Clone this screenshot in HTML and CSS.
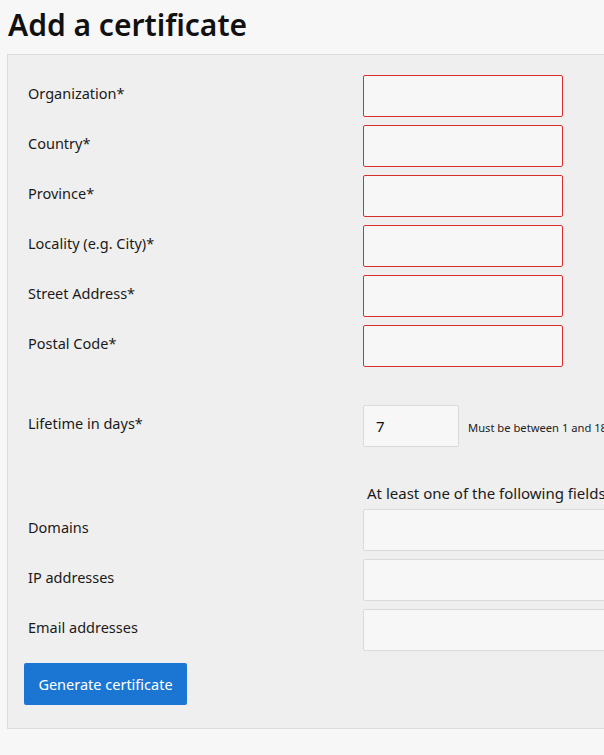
FILE: index.html
```html
<!DOCTYPE html>
<html lang="en">
<head>
<meta charset="utf-8">
<title>Add a certificate</title>
<link rel="stylesheet" href="styles.css">
</head>
<body>
<h1 class="title">Add a certificate</h1>
<form class="panel">
  <div class="grid">
    <label class="label">Organization*</label>
    <input class="field invalid" type="text">
    <label class="label">Country*</label>
    <input class="field invalid" type="text">
    <label class="label">Province*</label>
    <input class="field invalid" type="text">
    <label class="label">Locality (e.g. City)*</label>
    <input class="field invalid" type="text">
    <label class="label">Street Address*</label>
    <input class="field invalid" type="text">
    <label class="label">Postal Code*</label>
    <input class="field invalid" type="text">

    <label class="label lifetime-label">Lifetime in days*</label>
    <div class="lifetime">
      <input class="field short" type="text" value="7">
      <span class="hint">Must be between 1 and 1825</span>
    </div>

    <span></span>
    <div class="note">At least one of the following fields must be filled</div>
    <label class="label">Domains</label>
    <input class="field wide" type="text">
    <label class="label">IP addresses</label>
    <input class="field wide" type="text">
    <label class="label">Email addresses</label>
    <input class="field wide" type="text">
  </div>
  <button class="btn" type="button">Generate certificate</button>
</form>
</body>
</html>
```

FILE: styles.css
```css
html, body {
  overflow: hidden;
}
body {
  margin: 0;
  padding: 0 0 0 7px;
  background: #f7f7f7;
  color: #1a1a1a;
  font-family: "Noto Sans", "Open Sans", sans-serif;
  font-size: 15px;
  width: 900px;
}
.title {
  margin: 0;
  padding: 3px 0 0 1px;
  height: 54px;
  box-sizing: border-box;
  font-size: 30px;
  font-weight: 600;
  color: #111;
  line-height: 44px;
}
.panel {
  display: block;
  width: 800px;
  background: #efefef;
  border: 1px solid #dcdcdc;
  padding: 20px 16px 23px 16px;
  box-sizing: border-box;
}
.grid {
  display: grid;
  grid-template-columns: 339px 1fr;
  row-gap: 8px;
  align-items: start;
}
.label {
  padding: 8px 0 0 4px;
  line-height: 20px;
  font-size: 14.5px;
  color: #1a1a1a;
}
.field {
  height: 42px;
  box-sizing: border-box;
  background: #f7f7f7;
  border: 1px solid #dadada;
  border-radius: 2px;
  padding: 0 12px;
  font-family: inherit;
  font-size: 15px;
  color: #111;
  margin: 0;
  width: 200px;
}
.field.invalid {
  border-color: #dc2d2d;
}
.field.short {
  width: 96px;
}
.field.wide {
  width: 420px;
}
.lifetime-label {
  margin-top: 30px;
}
.lifetime {
  margin-top: 30px;
  display: flex;
  align-items: center;
  gap: 9px;
}
.hint {
  font-size: 11.2px;
  color: #222;
  white-space: nowrap;
  padding-top: 2px;
}
.note {
  margin-top: 28px;
  padding-left: 4px;
  line-height: 20px;
  font-size: 15px;
  white-space: nowrap;
  margin-bottom: -2px;
}
.btn {
  margin-top: 12px;
  height: 42px;
  width: 163px;
  background: #1a76d2;
  color: #fff;
  border: none;
  border-radius: 2px;
  font-family: inherit;
  font-size: 14.5px;
  padding: 0;
  display: block;
}
```
